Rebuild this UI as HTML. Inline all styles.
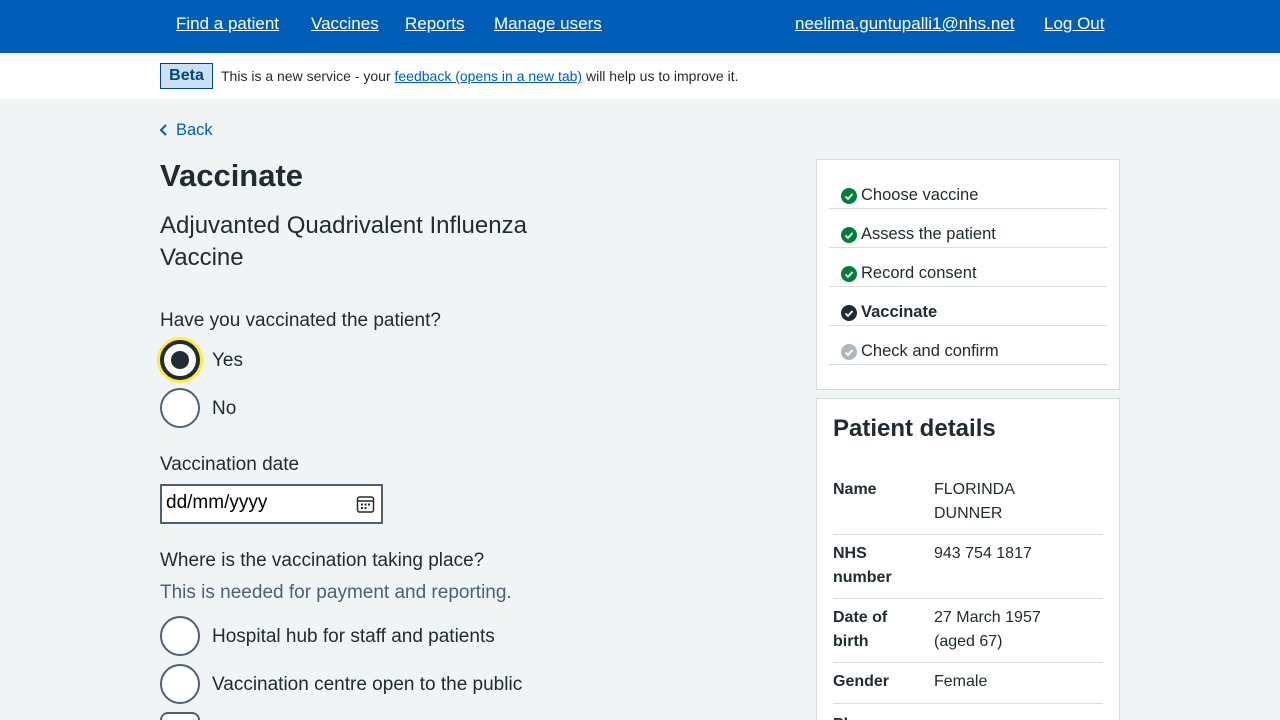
<!DOCTYPE html>
<html style="overflow:hidden;height:720px"><head><meta charset="utf-8"><style>
*{margin:0;padding:0;box-sizing:border-box}
body{width:1280px;height:720px;overflow:hidden;background:#f0f4f5;font-family:"Liberation Sans",sans-serif;color:#212b32;position:relative}
.a{position:absolute;white-space:nowrap}
.hdr{position:absolute;left:0;top:0;width:1280px;height:53px;background:#005eb8}
.hdr a{position:absolute;top:14px;color:#fff;font-size:17px;text-decoration:underline}
.beta{position:absolute;left:0;top:53px;width:1280px;height:46px;background:#fff}
.tag{position:absolute;left:160px;top:63px;width:53px;height:26px;border:1px solid #004585;background:#cce0f1;color:#004585;font-weight:bold;font-size:16px;text-align:center;line-height:24px}
.radio{position:absolute;left:160px;width:40px;height:40px;border:2px solid #4c6272;border-radius:50%;background:#fff}
.lbl{font-size:19px}
.card{position:absolute;background:#fff;border:1px solid #d8dde0}
.step{position:absolute;left:829px;width:278px;height:39px;border-bottom:1px solid #d8dde0;font-size:16.5px}
.step span.t{position:absolute;left:32px;top:16px}
.ic{position:absolute;left:12px;top:18px;width:16px;height:16px;border-radius:50%}
.row{position:absolute;left:833px;width:270px;border-bottom:1px solid #d8dde0;font-size:16px;line-height:24px}
.row b{position:absolute;left:0;top:1px}
.row span{position:absolute;left:101px;top:1px}
</style></head><body>
<div class="hdr">
<a style="left:176px">Find a patient</a><a style="left:311px">Vaccines</a><a style="left:405px">Reports</a><a style="left:494px">Manage users</a>
<a style="left:795px">neelima.guntupalli1@nhs.net</a><a style="left:1044px">Log Out</a>
</div>
<div class="beta"></div>
<div class="tag">Beta</div>
<div class="a" style="left:221px;top:68px;font-size:14px;color:#212b32">This is a new service - your <span style="color:#005eb8;text-decoration:underline">feedback (opens in a new tab)</span> will help us to improve it.</div>
<svg class="a" style="left:159px;top:123px" width="10" height="14" viewBox="0 0 10 14"><path d="M7 2L2 7l5 5" fill="none" stroke="#005eb8" stroke-width="2"/></svg>
<div class="a" style="left:176px;top:121px;font-size:16.5px;color:#005eb8">Back</div>
<div class="a" style="left:160px;top:158px;font-size:31px;font-weight:bold">Vaccinate</div>
<div class="a" style="left:160px;top:210px;font-size:24px;line-height:32px">Adjuvanted Quadrivalent Influenza<br>Vaccine</div>
<div class="a lbl" style="left:160px;top:310px">Have you vaccinated the patient?</div>
<div class="radio" style="top:340px;border:4px solid #212b32;box-shadow:0 0 0 3px #ffeb3b"><div style="position:absolute;left:7px;top:7px;width:18px;height:18px;border-radius:50%;background:#212b32"></div></div>
<div class="a lbl" style="left:212px;top:350px">Yes</div>
<div class="radio" style="top:388px"></div>
<div class="a lbl" style="left:212px;top:398px">No</div>
<div class="a lbl" style="left:160px;top:454px">Vaccination date</div>
<div class="a" style="left:160px;top:484px;width:223px;height:40px;border:2px solid #4c6272;background:#fff"></div>
<div class="a" style="left:166px;top:492px;font-size:19px;color:#000">dd/mm/yyyy</div>
<svg class="a" style="left:356px;top:495px" width="19" height="19" viewBox="0 0 19 19"><rect x="1.5" y="2" width="16" height="15" rx="2" fill="none" stroke="#212b32" stroke-width="1.5"/><line x1="1.5" y1="6" x2="17.5" y2="6" stroke="#212b32" stroke-width="1.5"/><g fill="#212b32"><rect x="5" y="8.5" width="2" height="2"/><rect x="8.5" y="8.5" width="2" height="2"/><rect x="12" y="8.5" width="2" height="2"/><rect x="5" y="12" width="2" height="2"/><rect x="8.5" y="12" width="2" height="2"/></g></svg>
<div class="a lbl" style="left:160px;top:550px">Where is the vaccination taking place?</div>
<div class="a lbl" style="left:160px;top:582px;color:#4c6272">This is needed for payment and reporting.</div>
<div class="radio" style="top:616px"></div>
<div class="a lbl" style="left:212px;top:626px">Hospital hub for staff and patients</div>
<div class="radio" style="top:664px"></div>
<div class="a lbl" style="left:212px;top:674px">Vaccination centre open to the public</div>
<div class="radio" style="top:712px;height:8px;border-bottom:none;border-radius:20px 20px 0 0"></div>

<div class="card" style="left:816px;top:159px;width:304px;height:231px"></div>
<div class="step" style="top:170px"><div class="ic" style="background:#007f3b"></div><span class="t">Choose vaccine</span></div>
<div class="step" style="top:209px"><div class="ic" style="background:#007f3b"></div><span class="t">Assess the patient</span></div>
<div class="step" style="top:248px"><div class="ic" style="background:#007f3b"></div><span class="t">Record consent</span></div>
<div class="step" style="top:287px"><div class="ic" style="background:#212b32"></div><span class="t" style="font-weight:bold">Vaccinate</span></div>
<div class="step" style="top:326px"><div class="ic" style="background:#aeb7bd"></div><span class="t">Check and confirm</span></div>
<svg class="a" style="left:841px;top:188px" width="16" height="172" viewBox="0 0 16 172"><g fill="none" stroke="#fff" stroke-width="1.8"><path d="M4.5 8.5l2.5 2.5 4.5-5"/><path d="M4.5 47.5l2.5 2.5 4.5-5"/><path d="M4.5 86.5l2.5 2.5 4.5-5"/><path d="M4.5 125.5l2.5 2.5 4.5-5"/><path d="M4.5 164.5l2.5 2.5 4.5-5"/></g></svg>

<div class="card" style="left:816px;top:398px;width:304px;height:322px;border-bottom:none"></div>
<div class="a" style="left:833px;top:415px;font-size:24px;font-weight:bold">Patient details</div>
<div class="row" style="top:477px;height:58px"><b>Name</b><span>FLORINDA<br>DUNNER</span></div>
<div class="row" style="top:541px;height:58px"><b>NHS<br>number</b><span>943 754 1817</span></div>
<div class="row" style="top:605px;height:58px"><b>Date of<br>birth</b><span>27 March 1957<br>(aged 67)</span></div>
<div class="row" style="top:669px;height:35px"><b>Gender</b><span>Female</span></div>
<div class="row" style="top:712px;height:8px;border:none;overflow:hidden"><b>Phone</b></div>
</body></html>
